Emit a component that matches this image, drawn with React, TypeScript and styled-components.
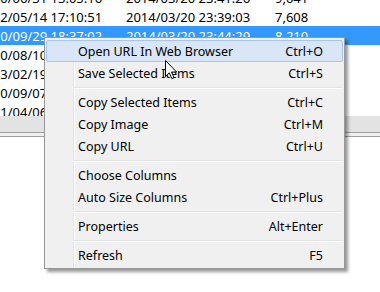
import React from 'react';
import styled, { createGlobalStyle } from 'styled-components';

interface Entry {
  created: string;
  modified: string;
  size: string;
  selected?: boolean;
}

interface MenuEntry {
  label?: string;
  shortcut?: string;
  active?: boolean;
  separator?: boolean;
}

const rows: Entry[] = [
  { created: '2010/06/31 13:05:16', modified: '2014/03/20 23:41:26', size: '9,041' },
  { created: '2012/05/14 17:10:51', modified: '2014/03/20 23:39:03', size: '7,608' },
  { created: '2010/09/29 18:37:02', modified: '2014/03/20 23:44:29', size: '8,210', selected: true },
  { created: '2010/08/10 21:14:33', modified: '2014/03/20 23:40:12', size: '3,118' },
  { created: '2013/02/19 09:52:40', modified: '2014/03/20 23:42:55', size: '12,504' },
  { created: '2010/09/07 11:26:08', modified: '2014/03/20 23:38:47', size: '6,932' },
  { created: '2011/04/06 15:03:19', modified: '2014/03/20 23:43:10', size: '4,770' },
];

const menu: MenuEntry[] = [
  { label: 'Open URL In Web Browser', shortcut: 'Ctrl+O', active: true },
  { label: 'Save Selected Items', shortcut: 'Ctrl+S' },
  { separator: true },
  { label: 'Copy Selected Items', shortcut: 'Ctrl+C' },
  { label: 'Copy Image', shortcut: 'Ctrl+M' },
  { label: 'Copy URL', shortcut: 'Ctrl+U' },
  { separator: true },
  { label: 'Choose Columns' },
  { label: 'Auto Size Columns', shortcut: 'Ctrl+Plus' },
  { separator: true },
  { label: 'Properties', shortcut: 'Alt+Enter' },
  { separator: true },
  { label: 'Refresh', shortcut: 'F5' },
];

const GlobalStyle = createGlobalStyle`
  html, body {
    margin: 0;
    padding: 0;
    background: #fff;
    overflow: hidden;
  }
`;

const Window = styled.div`
  position: relative;
  width: 380px;
  height: 292px;
  display: flex;
  flex-direction: column;
  overflow: hidden;
  background: #fff;
  font-family: 'Noto Sans', 'Liberation Sans', sans-serif;
`;

const ListView = styled.div`
  height: 116px;
  overflow: hidden;
  flex: none;
`;

const ListBody = styled.div`
  margin: -12px 0 0 -24px;
`;

const Row = styled.div<{ $selected?: boolean }>`
  display: grid;
  grid-template-columns: 148px 149px 1fr;
  height: 19px;
  align-items: center;
  font-size: 13px;
  white-space: nowrap;
  color: ${(p) => (p.$selected ? '#fff' : '#000')};
  background: ${(p) => (p.$selected ? '#3399ff' : 'transparent')};
`;

const Cell = styled.span`
  padding-left: 2px;
  overflow: hidden;
`;

const ScrollBar = styled.div`
  height: 16px;
  flex: none;
  background: #e3e3e3;
`;

const Splitter = styled.div`
  height: 3px;
  flex: none;
  background: #f0f0f0;
  border-top: 1px solid #a0a0a0;
  border-bottom: 1px solid #a0a0a0;
`;

const LowerPane = styled.div`
  flex: 1;
  background: #fff;
`;

const Menu = styled.div`
  position: absolute;
  left: 44px;
  top: 37px;
  width: 297px;
  padding: 2px 1px;
  border: 1px solid #979797;
  background: linear-gradient(
    to right,
    #f0f0f0 28px,
    #e2e3e3 28px,
    #e2e3e3 29px,
    #fff 29px,
    #fff 30px,
    #f0f0f0 30px
  );
  box-shadow: 3px 3px 3px rgba(0, 0, 0, 0.4);
  font-family: 'Noto Sans', 'Liberation Sans', sans-serif;
  font-size: 12.5px;
  color: #000;
`;

const Item = styled.div<{ $active?: boolean }>`
  display: flex;
  align-items: center;
  height: 22px;
  box-sizing: border-box;
  padding: 0 19px 0 31px;
  border: 1px solid ${(p) => (p.$active ? '#a6c6ee' : 'transparent')};
  border-radius: 2px;
  background: ${(p) => (p.$active ? '#d8e6f7' : 'transparent')};
  white-space: nowrap;
`;

const Label = styled.span`
  flex: 1;
`;

const Shortcut = styled.span`
  text-align: right;
`;

const Separator = styled.div`
  height: 1px;
  margin: 3px 0 2px 27px;
  background: #e2e3e3;
  border-bottom: 1px solid #fff;
`;

const Pointer = styled.svg`
  position: absolute;
  left: 165px;
  top: 60px;
`;

function App (): React.ReactElement {
  return (
    <Window>
      <GlobalStyle />
      <ListView>
        <ListBody>
          {rows.map((r, i) => (
            <Row key={i} $selected={r.selected}>
              <Cell>{r.created}</Cell>
              <Cell>{r.modified}</Cell>
              <Cell>{r.size}</Cell>
            </Row>
          ))}
        </ListBody>
      </ListView>
      <ScrollBar />
      <Splitter />
      <LowerPane />

      <Menu>
        {menu.map((m, i) =>
          m.separator ? (
            <Separator key={i} />
          ) : (
            <Item key={i} $active={m.active}>
              <Label>{m.label}</Label>
              {m.shortcut && <Shortcut>{m.shortcut}</Shortcut>}
            </Item>
          )
        )}
      </Menu>

      <Pointer width='13' height='20' viewBox='0 0 13 20'>
        <path
          d='M0.5 0.5 L0.5 16.5 L4.3 12.8 L6.8 18.6 L9 17.6 L6.6 12 L11.6 12 Z'
          fill='#fff'
          stroke='#000'
          strokeWidth='1'
          strokeLinejoin='miter'
        />
      </Pointer>
    </Window>
  );
}

export default App;
